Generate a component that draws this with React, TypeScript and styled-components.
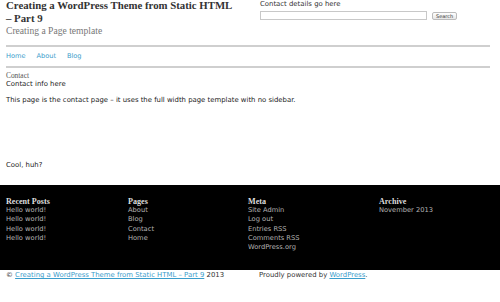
import React, { FC } from "react";
import styled, { createGlobalStyle } from "styled-components";

const GlobalStyle = createGlobalStyle`
  html, body {
    margin: 0;
    padding: 0;
    background: #fff;
  }
  body {
    font-family: "DejaVu Sans", Verdana, sans-serif;
    font-size: 6.9px;
    color: #222;
  }
`;

const Page = styled.div`
  width: 500px;
  height: 302px;
  overflow: hidden;
  display: flex;
  flex-direction: column;
`;

const Header = styled.header`
  display: flex;
  padding: 0 6px;
`;

const Branding = styled.div`
  width: 254px;
`;

const SiteTitle = styled.h1`
  margin: -1px 0 0;
  width: 232px;
  font-family: "Liberation Serif", "Times New Roman", serif;
  font-size: 10.8px;
  line-height: 13px;
  font-weight: bold;
  color: #333;
`;

const Tagline = styled.h2`
  margin: 0;
  font-family: "Liberation Serif", "Times New Roman", serif;
  font-size: 9.6px;
  line-height: 12px;
  font-weight: normal;
  color: #777;
`;

const Widget = styled.div`
  flex: 1;
  display: flex;
  flex-direction: column;
  gap: 3px;
  padding-top: 1px;
  line-height: 7px;
  color: #333;
`;

const SearchRow = styled.form`
  display: flex;
  align-items: center;
  gap: 5px;
  margin: 0;
  height: 9px;
`;

const SearchInput = styled.input`
  width: 167px;
  height: 9px;
  box-sizing: border-box;
  border: 1px solid #c8c8c8;
  padding: 0;
`;

const SearchButton = styled.button`
  height: 8px;
  box-sizing: border-box;
  padding: 0 3px;
  border: 1px solid #bbb;
  border-radius: 2px;
  background: linear-gradient(#fff, #e6e6e6);
  font-family: "DejaVu Sans", Verdana, sans-serif;
  font-size: 5px;
  line-height: 6px;
  color: #333;
`;

const Rule = styled.hr<{ $top?: number }>`
  margin: ${p => p.$top ?? 0}px 10px 0 6px;
  border: none;
  border-top: 2px solid #cfcfcf;
`;

const Nav = styled.nav`
  display: flex;
  gap: 11px;
  padding: 5px 6px;
  font-size: 6.6px;
  line-height: 9px;
`;

const NavLink = styled.a`
  color: #3a9dcb;
  text-decoration: none;
`;

const Content = styled.main`
  padding: 4px 6px 0;
  height: 117px;
  box-sizing: border-box;
`;

const Breadcrumb = styled.div`
  font-family: "Liberation Serif", "Times New Roman", serif;
  font-size: 7.4px;
  line-height: 8px;
  color: #555;
`;

const EntryTitle = styled.div`
  font-size: 6.9px;
  line-height: 8px;
  color: #222;
`;

const Para = styled.p<{ $gap: number }>`
  margin: ${p => p.$gap}px 0 0;
  line-height: 9px;
  color: #222;
`;

const Footer = styled.footer`
  background: #000;
  display: grid;
  grid-template-columns: 122px 120px 131px 1fr;
  padding: 12px 6px 0;
  height: 85px;
  box-sizing: border-box;
`;

const FooterHeading = styled.h3`
  margin: 0;
  font-family: "Liberation Serif", "Times New Roman", serif;
  font-size: 8.1px;
  line-height: 9px;
  font-weight: bold;
  color: #ddd;
`;

const FooterList = styled.ul`
  list-style: none;
  margin: 0;
  padding: 0;
`;

const FooterItem = styled.li`
  font-size: 6.7px;
  line-height: 9.3px;
  color: #b4b4b4;
`;

const Colophon = styled.div`
  display: flex;
  padding: 1px 6px;
  line-height: 9px;
  color: #333;
`;

const ColophonCell = styled.div<{ $width?: number }>`
  width: ${p => (p.$width ? `${p.$width}px` : "auto")};
`;

const InlineLink = styled.a`
  color: #3a9dcb;
`;

type FooterColumn = { title: string; items: string[] };

const columns: FooterColumn[] = [
  { title: "Recent Posts", items: ["Hello world!", "Hello world!", "Hello world!", "Hello world!"] },
  { title: "Pages", items: ["About", "Blog", "Contact", "Home"] },
  { title: "Meta", items: ["Site Admin", "Log out", "Entries RSS", "Comments RSS", "WordPress.org"] },
  { title: "Archive", items: ["November 2013"] }
];

const App: FC = () => {
  return (
    <Page>
      <GlobalStyle />
      <Header>
        <Branding>
          <SiteTitle>Creating a WordPress Theme from Static HTML – Part 9</SiteTitle>
          <Tagline>Creating a Page template</Tagline>
        </Branding>
        <Widget>
          <div>Contact details go here</div>
          <SearchRow onSubmit={e => e.preventDefault()}>
            <SearchInput type="text" />
            <SearchButton type="submit">Search</SearchButton>
          </SearchRow>
        </Widget>
      </Header>
      <Rule $top={8} />
      <Nav>
        <NavLink href="#">Home</NavLink>
        <NavLink href="#">About</NavLink>
        <NavLink href="#">Blog</NavLink>
      </Nav>
      <Rule />
      <Content>
        <Breadcrumb>Contact</Breadcrumb>
        <EntryTitle>Contact info here</EntryTitle>
        <Para $gap={8}>
          This page is the contact page – it uses the full width page template with no sidebar.
        </Para>
        <Para $gap={56}>Cool, huh?</Para>
      </Content>
      <Footer>
        {columns.map(col => (
          <div key={col.title}>
            <FooterHeading>{col.title}</FooterHeading>
            <FooterList>
              {col.items.map((item, i) => (
                <FooterItem key={i}>{item}</FooterItem>
              ))}
            </FooterList>
          </div>
        ))}
      </Footer>
      <Colophon>
        <ColophonCell $width={253}>
          © <InlineLink href="#">Creating a WordPress Theme from Static HTML – Part 9</InlineLink> 2013
        </ColophonCell>
        <ColophonCell>
          Proudly powered by <InlineLink href="#">WordPress</InlineLink>.
        </ColophonCell>
      </Colophon>
    </Page>
  );
};

export default App;
